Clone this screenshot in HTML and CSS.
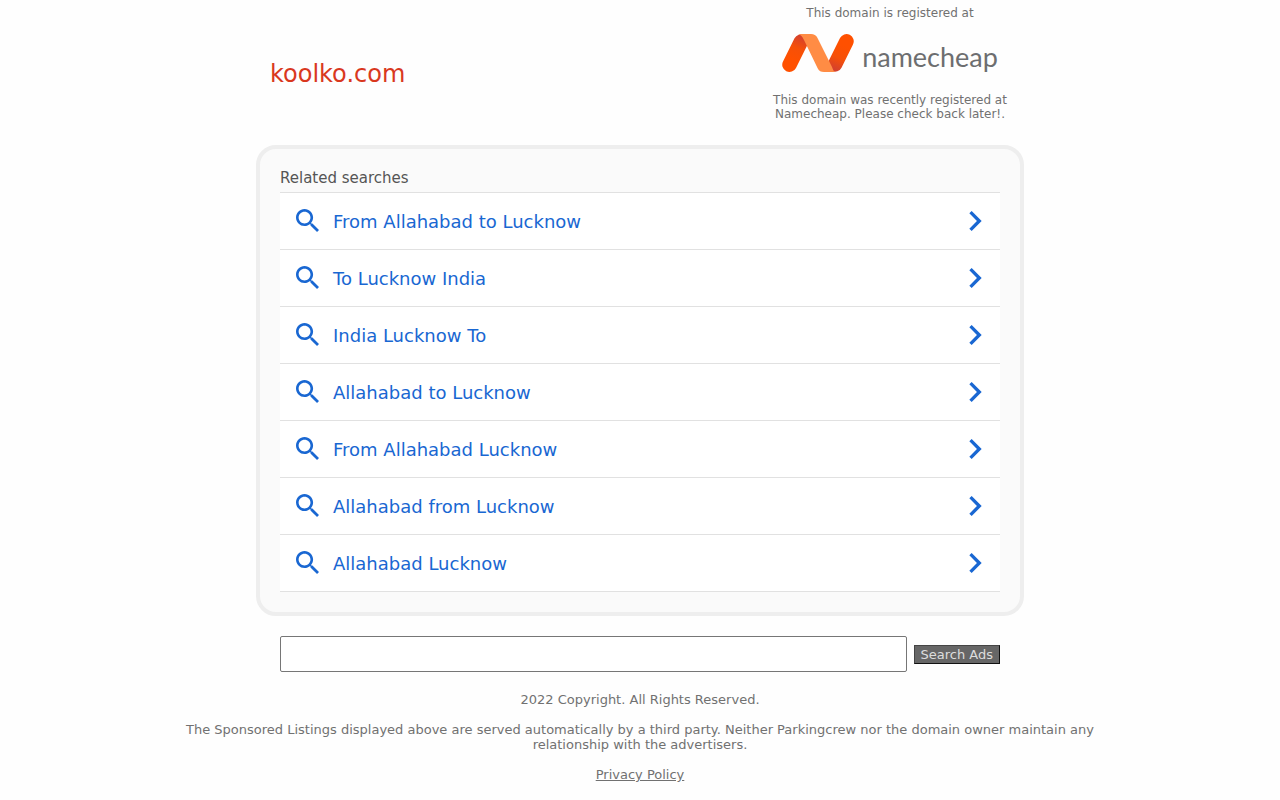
FILE: index.html
```html
<!DOCTYPE html>
<html lang="en">
<head>
<meta charset="utf-8">
<meta name="viewport" content="width=device-width, initial-scale=1">
<title>koolko.com</title>
<link rel="stylesheet" href="styles.css">
</head>
<body>
<svg class="symbols" aria-hidden="true">
  <symbol id="search" viewBox="3 3 17.49 17.49"><path d="M15.5 14h-.79l-.28-.27C15.41 12.59 16 11.11 16 9.5 16 5.91 13.09 3 9.5 3S3 5.91 3 9.5 5.91 16 9.5 16c1.61 0 3.09-.59 4.23-1.57l.27.28v.79l5 4.99L20.49 19l-4.99-5zm-6 0C7.01 14 5 11.99 5 9.5S7.01 5 9.5 5 14 7.01 14 9.5 11.99 14 9.5 14z"/></symbol>
  <symbol id="chevron" viewBox="8.59 6 7.41 12"><path d="M10 6L8.59 7.41 13.17 12l-4.58 4.59L10 18l6-6z"/></symbol>
</svg>
<header class="header">
  <h1 class="domain">koolko.com</h1>
  <div class="registrar">
    <p class="registrar-text">This domain is registered at</p>
    <a class="logo" href="#">
      <svg class="logo-mark" viewBox="0 0 72 38" aria-hidden="true">
        <defs>
          <linearGradient id="left" gradientUnits="userSpaceOnUse" x1="10" y1="26" x2="20" y2="2"><stop offset="0" stop-color="#ff5000"/><stop offset=".5" stop-color="#f65008"/><stop offset="1" stop-color="#d2402f"/></linearGradient>
          <linearGradient id="right" gradientUnits="userSpaceOnUse" x1="62" y1="12" x2="52" y2="36"><stop offset="0" stop-color="#ff5000"/><stop offset=".5" stop-color="#f65008"/><stop offset="1" stop-color="#d2402f"/></linearGradient>
        </defs>
        <g fill="none" stroke-width="14.5" stroke-linecap="round">
          <path stroke="url(#left)" d="M7.500 30.700L19 7.500"/>
          <path stroke="url(#right)" d="M64.500 7.300L53 30.500"/>
        </g>
        <path fill="#ff8c44" d="M19 0H29C32 0 34 1 35.500 4L50 33C51 36 52 38 54 38H42C39 38 37 37 35.500 34L22 6C20 2 19 1 16.500 .5C17 .2 18 0 19 0Z"/>
      </svg>
      <span class="logo-name">namecheap</span>
    </a>
    <p class="registrar-text">This domain was recently registered at Namecheap. Please check back later!.</p>
  </div>
</header>
<main class="main">
  <section class="card">
    <h2 class="card-title">Related searches</h2>
    <ul class="list">
      <li><a class="row" href="#"><svg class="search-icon"><use href="#search"/></svg><span class="label">From Allahabad to Lucknow</span><svg class="chevron"><use href="#chevron"/></svg></a></li>
      <li><a class="row" href="#"><svg class="search-icon"><use href="#search"/></svg><span class="label">To Lucknow India</span><svg class="chevron"><use href="#chevron"/></svg></a></li>
      <li><a class="row" href="#"><svg class="search-icon"><use href="#search"/></svg><span class="label">India Lucknow To</span><svg class="chevron"><use href="#chevron"/></svg></a></li>
      <li><a class="row" href="#"><svg class="search-icon"><use href="#search"/></svg><span class="label">Allahabad to Lucknow</span><svg class="chevron"><use href="#chevron"/></svg></a></li>
      <li><a class="row" href="#"><svg class="search-icon"><use href="#search"/></svg><span class="label">From Allahabad Lucknow</span><svg class="chevron"><use href="#chevron"/></svg></a></li>
      <li><a class="row" href="#"><svg class="search-icon"><use href="#search"/></svg><span class="label">Allahabad from Lucknow</span><svg class="chevron"><use href="#chevron"/></svg></a></li>
      <li><a class="row" href="#"><svg class="search-icon"><use href="#search"/></svg><span class="label">Allahabad Lucknow</span><svg class="chevron"><use href="#chevron"/></svg></a></li>
    </ul>
  </section>
  <form class="search-form">
    <input class="search-input" type="text" aria-label="Search Ads">
    <button class="search-button" type="submit">Search Ads</button>
  </form>
</main>
<footer class="footer">
  <p>2022 Copyright. All Rights Reserved.</p>
  <p>The Sponsored Listings displayed above are served automatically by a third party. Neither Parkingcrew nor the domain owner maintain any relationship with the advertisers.</p>
  <p><a class="privacy" href="#">Privacy Policy</a></p>
</footer>
</body>
</html>
```
FILE: styles.css
```css
* { box-sizing: border-box; }
body {
  margin: 0;
  background: #fefefe;
  color: #717171;
  font-family: "DejaVu Sans", Verdana, sans-serif;
}
h1, h2, p, ul { margin: 0; padding: 0; font-weight: 400; }
.symbols { display: none; }
.header, .main { width: 60%; min-width: 320px; margin: 0 auto; }
.header {
  display: flex;
  align-items: center;
  justify-content: space-between;
  padding: 6px 12px 24px 14px;
}
.domain { color: #d9381e; font-size: 24px; line-height: 32px; padding-top: 20px; }
.registrar { width: 244px; text-align: center; }
.registrar-text { font-size: 12px; line-height: 14px; }
.logo {
  display: flex;
  align-items: center;
  justify-content: center;
  gap: 8px;
  height: 73px;
  padding-bottom: 7px;
  color: #6d6e70;
  text-decoration: none;
}
.logo-mark { width: 72px; height: 38px; }
.logo-name {
  font-family: Lato, "Open Sans", sans-serif;
  font-size: 27px;
  line-height: 32px;
  padding-top: 8px;
}
.card {
  background: #fafafa;
  border: 4px solid #eee;
  border-radius: 20px;
  padding: 20px;
}
.card-title { color: #555; font-size: 15px; line-height: 18px; padding-bottom: 5px; }
.list { list-style: none; border-top: 1px solid #e1e1e1; }
.row {
  display: flex;
  align-items: center;
  height: 57px;
  padding: 0 18px 0 16px;
  background: #fff;
  border-bottom: 1px solid #e1e1e1;
  color: #1967d2;
  fill: #1967d2;
  font-size: 18px;
  line-height: 24px;
  text-decoration: none;
}
.search-icon { width: 23px; height: 24px; padding-bottom: 1px; margin-right: 14px; }
.label { flex: 1; padding-top: 2px; }
.chevron { width: 13px; height: 20px; }
.search-form { display: flex; align-items: center; gap: 7px; padding: 20px 24px; }
.search-input {
  flex: 1;
  min-width: 0;
  height: 36px;
  padding: 4px 8px;
  border: 1px solid #767676;
  border-radius: 2px;
  background: #fff;
  font: inherit;
}
.search-button {
  height: 19px;
  padding: 0 6px;
  border: 1px solid #111;
  border-top-color: #444;
  border-left-color: #444;
  background: #666;
  color: #ddd;
  font-family: inherit;
  font-size: 13px;
  line-height: 15px;
}
.footer {
  width: 75%;
  margin: 0 auto;
  display: flex;
  flex-direction: column;
  gap: 15px;
  text-align: center;
  font-size: 13px;
  line-height: 15px;
}
.privacy { color: inherit; }
```
